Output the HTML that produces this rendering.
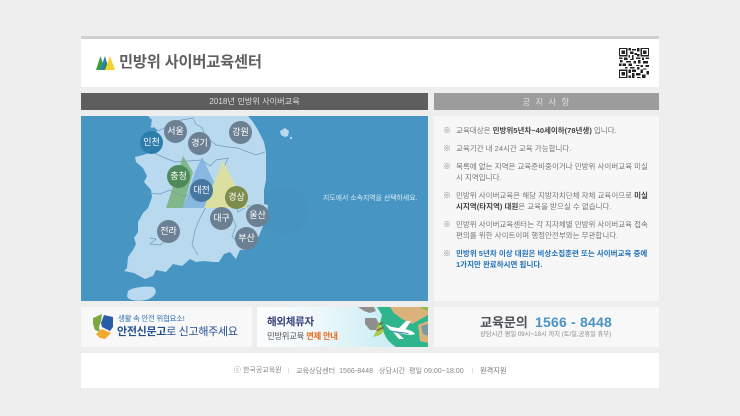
<!DOCTYPE html>
<html lang="ko"><head><meta charset="utf-8"><title>민방위 사이버교육센터</title>
<style>
*{margin:0;padding:0;box-sizing:border-box}
html,body{width:740px;height:416px;overflow:hidden;background:#eeeeee}
body{position:relative;font-family:"Liberation Sans","Noto Sans CJK KR",sans-serif;color:#666}
#w{position:absolute;left:0;top:0;width:740px;height:416px;filter:blur(.35px)}
.a{position:absolute}
.t{position:absolute;white-space:nowrap;line-height:12px}
.n{font-size:7.5px;color:#777;left:456px;height:12px;margin-top:1px}
.n b{color:#444}
.bu{font-size:8px;color:#888;left:443px;margin-top:1px}
.c{position:absolute;width:23px;height:23px;border-radius:50%;color:#fff;font-size:9px;line-height:23px;text-align:center;background:#6c8094;font-weight:400}
</style></head><body><div id="w">
<div class="a" style="left:81px;top:36px;width:578px;height:3px;background:#cfcfcf"></div>
<div class="a" style="left:81px;top:39px;width:578px;height:48px;background:#fff"></div>
<svg class="a" style="left:96px;top:56px" width="19" height="14" viewBox="0 0 19 14">
<polygon points="0,14 4.5,0 9,14" fill="#3f9d3c"/><polygon points="4,14 9,0 13,14" fill="#2f7fb8"/><polygon points="7,14 10,5 12,14" fill="#1f8a6a"/><polygon points="9,14 14,0 19,14" fill="#f7d12e"/></svg>
<div class="t" style="left:119px;top:53px;line-height:20px;font-size:15.3px;font-weight:700;color:#5f5f5f;letter-spacing:-.2px">민방위 사이버교육센터</div>
<svg class="a" style="left:619px;top:48px" width="30" height="30" viewBox="0 0 25 25" shape-rendering="crispEdges"><rect width="25" height="25" fill="#fff"/><path fill="#222" d="M0 0h7v7H0zM18 0h7v7h-7zM0 18h7v7H0z"/><path fill="#fff" d="M1 1h5v5H1zM19 1h5v5h-5zM1 19h5v5H1z"/><path fill="#222" d="M2 2h3v3H2zM20 2h3v3h-3zM2 20h3v3H2zM8 0h2v2H8zM11 1h3v1h-3zM15 0h2v3h-2zM9 3h3v2H9zM13 4h2v2h-2zM8 6h1v2H8zM11 6h1v3h-1zM15 5h2v2h-2zM0 8h3v1H0zM4 8h3v2H4zM9 9h3v1H9zM14 8h4v1h-4zM19 8h2v2h-2zM22 8h3v1h-3zM1 10h2v2H1zM6 11h4v1H6zM12 11h2v2h-2zM16 10h2v3h-2zM20 11h4v2h-4zM0 13h2v2H0zM3 13h3v2H3zM8 13h3v2H8zM14 14h3v1h-3zM18 14h2v2h-2zM22 14h3v2h-3zM5 16h2v1H5zM9 16h4v1H9zM15 16h2v2h-2zM20 17h3v1h-3zM8 18h2v3H8zM11 18h3v2h-3zM18 18h2v3h-2zM23 19h2v3h-2zM11 21h2v4h-2zM14 21h4v2h-4zM8 23h2v2H8zM15 24h3v1h-3zM19 22h3v3h-3z"/></svg>

<div class="a" style="left:81px;top:93px;width:347px;height:17px;background:#5e5e5e"></div>
<div class="t" style="left:81px;width:347px;top:96px;text-align:center;font-size:8.2px;color:#ddd">2018년 민방위 사이버교육</div>
<div class="a" style="left:434px;top:93px;width:225px;height:17px;background:#9c9c9c"></div>
<div class="t" style="left:434px;width:225px;top:96px;text-align:center;font-size:8.5px;color:#ddd;letter-spacing:1.4px">공 지 사 항</div>

<svg class="a" style="left:81px;top:116px" width="347" height="185" viewBox="81 116 347 185">
<rect x="81" y="116" width="347" height="185" fill="#4795c3"/>
<circle cx="284" cy="210" r="24" fill="#4289b4" opacity=".15"/>
<path fill="#b9d9ee" d="M148 116L152 120 151 124 158 131 150 134 147 145 152 152 143 155 135 157 136 162 143 168 147 176 144 182 151 190 152 197 148 208 143 213 138 222 138 232 134 238 136 244 133 250 128 257 127 268 124 271 134 273 145 279 153 276 156 270 166 272 173 264 182 266 190 259 196 262 204 261 213 262 219 262 224 254 230 252 236 259 240 250 246 250 252 242 259 236 263 226 267 213 268 205 264 204 264 190 266 180 266 165 266 152 264 142 258 130 253 122 248 116Z"/>
<path fill="none" stroke="#6c9cbc" stroke-width=".7" d="M158 131C165 128 172 124 176 121L193 118 196 124 202 128 206 137 216 145 228 147 238 148 248 152 256 155 265 152M152 152L165 158 175 162 188 161 202 160 210 166 216 160 228 158 224 167 218 178M143 193L160 194 170 190 180 195 196 197 206 207 200 218 195 230 192 245 198 255M206 207L216 204 236 206M236 206L238 212 250 205M230 212L236 226 232 236 240 245M150 238L156 239 150 244 160 245 170 237"/>
<polygon points="183,156 193,172 183,208 166,208" fill="#74ae74" opacity=".8"/>
<polygon points="202,157 214,182 204,208 183,208 195,172" fill="#7fb1df" opacity=".85"/>
<polygon points="223,161 247,208 204,208" fill="#dcdf9a" opacity=".95"/>
<path fill="#b9d9ee" d="M128 291C133 287 146 286 153 287 158 290 156 296 149 299 140 302 128 301 127 296Z"/>
<path fill="#b9d9ee" d="M280 131L285 128 289 131 288 136 285 137 281 135ZM290 137h2v2h-2zM150 126l8-3 1 2-7 3z"/>
</svg>
<div class="c" style="left:164px;top:120px">서울</div>
<div class="c" style="left:140px;top:131px;background:#2d7dac">인천</div>
<div class="c" style="left:188px;top:132px">경기</div>
<div class="c" style="left:229px;top:121px">강원</div>
<div class="c" style="left:167px;top:165px;background:#4f8a5a">충청</div>
<div class="c" style="left:190px;top:179px;background:#47769f">대전</div>
<div class="c" style="left:225px;top:186px;background:#7c8d4c">경상</div>
<div class="c" style="left:210px;top:207px">대구</div>
<div class="c" style="left:246px;top:204px">울산</div>
<div class="c" style="left:235px;top:227px">부산</div>
<div class="c" style="left:157px;top:220px">전라</div>
<div class="t" style="left:323px;top:193px;font-size:6.9px;color:#d9ebf6">지도에서 소속지역을 선택하세요.</div>

<div class="a" style="left:434px;top:116px;width:225px;height:185px;background:#f7f7f8"></div>
<div class="t bu" style="top:124px">※</div><div class="t n" style="top:124px">교육대상은 <b>민방위5년차~40세이하(78년생)</b> 입니다.</div>
<div class="t bu" style="top:142px">※</div><div class="t n" style="top:142px">교육기간 내 24시간 교육 가능합니다.</div>
<div class="t bu" style="top:160px">※</div><div class="t n" style="top:160px">목록에 없는 지역은 교육준비중이거나 민방위 사이버교육 미실</div><div class="t n" style="top:171px">시 지역입니다.</div>
<div class="t bu" style="top:189px">※</div><div class="t n" style="top:189px">민방위 사이버교육은 해당 지방자치단체 자체 교육이므로 <b>미실</b></div><div class="t n" style="top:200px"><b>시지역(타지역) 대원</b>은 교육을 받으실 수 없습니다.</div>
<div class="t bu" style="top:218px">※</div><div class="t n" style="top:218px">민방위 사이버교육센터는 각 지자체별 민방위 사이버교육 접속</div><div class="t n" style="top:229px">편의를 위한 사이트이며 행정안전부와는 무관합니다.</div>
<div class="t bu" style="top:247px">※</div><div class="t n" style="top:247px;color:#1f6fb5;font-weight:700">민방위 5년차 이상 대원은 비상소집훈련 또는 사이버교육 중에</div><div class="t n" style="top:258px;color:#1f6fb5;font-weight:700">1가지만 완료하시면 됩니다.</div>

<div class="a" style="left:81px;top:307px;width:171px;height:40px;background:#f8f8f8"></div>
<svg class="a" style="left:93px;top:314px" width="20" height="26" viewBox="0 0 20 26">
<path fill="#7aa83e" d="M0 4L9 0 8 7 6 13 7 18 2 16 0 10Z"/><path fill="#2a5ca8" d="M11 1L20 3 20 13 17 17 9 13 8 9Z"/><path fill="#f2a92e" d="M3 20L9 15 18 19 12 25 7 24Z"/></svg>
<div class="t" style="left:118px;top:313px;font-size:7.5px;color:#2f6fb0;letter-spacing:-.3px">생활 속 안전 위협요소!</div>
<div class="t" style="left:117px;top:325px;line-height:14px;font-size:11px;color:#24508f;letter-spacing:-.3px"><b>안전신문고</b>로 신고해주세요</div>

<div class="a" style="left:257px;top:307px;width:171px;height:40px;background:linear-gradient(90deg,#fbfdfd 0,#f2fafc 30%,#cfeef5 70%,#c4eaf3 100%)"></div>
<svg class="a" style="left:340px;top:307px" width="88" height="40" viewBox="0 0 88 40">
<path fill="#8e8f8c" d="M18 0H34L36 4 30 6 24 4ZM25 11L36 11 39 17 36 23 30 23 25 17Z"/>
<path fill="#2fb58c" d="M37 0H88V40H56C50 36 46 32 44 26L40 16 42 8Z"/>
<path fill="#dcb27c" d="M50 0H80L88 4V8L72 17 62 12 54 6Z"/>
<path fill="#8fbf3e" d="M80 0H88V4Z"/>
<path fill="#dcb27c" d="M78 18L88 14V36L80 34Z"/>
<path fill="#7b9aa0" d="M81 19L88 17V29L83 27Z"/>
<path fill="#a3c94b" d="M38 14L44 24 40 28 33 30 37 23Z"/>
<path fill="#8c4e2e" d="M36 23l7-3 1 1-7 3zM38 17l4-2 1 1-4 2z"/>
<path fill="#fff" d="M45 17L52 20 64 22C70 23 74 25 75 27 71 29 63 27 56 25L50 23ZM58 22L66 14H71L65 23ZM58 26L64 32H59L53 25Z"/>
<path fill="#2a74b8" d="M53 24l15 2 1 1-16-2z"/>
</svg>
<div class="t" style="left:267px;top:315px;line-height:14px;font-size:10.5px;font-weight:700;color:#3a3f7c;letter-spacing:-.3px">해외체류자</div>
<div class="t" style="left:267px;top:330px;font-size:8.4px;color:#555;letter-spacing:-.3px">민방위교육 <b style="color:#e86a1c">면제 안내</b></div>

<div class="a" style="left:434px;top:307px;width:225px;height:40px;background:#f8f8f8"></div>
<div class="t" style="left:480px;top:315px;line-height:16px;font-size:13px;font-weight:700;color:#4f5357">교육문의</div>
<div class="t" style="left:535px;top:313px;line-height:18px;font-size:14px;font-weight:700;color:#4b93c4;letter-spacing:.2px">1566 - 8448</div>
<div class="t" style="left:480px;top:329px;font-size:6.3px;color:#888;letter-spacing:-.05px">상담시간 평일 09시~18시 까지 (토/일,공휴일 휴무)</div>

<div class="a" style="left:81px;top:353px;width:578px;height:35px;background:#fff"></div>
<div class="t" style="left:234px;top:365px;font-size:7px;color:#888">ⓒ 한국공교육원</div>
<div class="a" style="left:288px;top:368px;width:1px;height:5px;background:#ddd"></div>
<div class="t" style="left:296px;top:365px;font-size:7.1px;color:#888">교육상담센터 &nbsp;1566-8448 &nbsp; 상담시간 &nbsp;평일 09:00~18:00</div>
<div class="a" style="left:472px;top:368px;width:1px;height:5px;background:#ddd"></div>
<div class="t" style="left:480px;top:365px;font-size:7.2px;color:#777">원격지원</div>
</div></body></html>
